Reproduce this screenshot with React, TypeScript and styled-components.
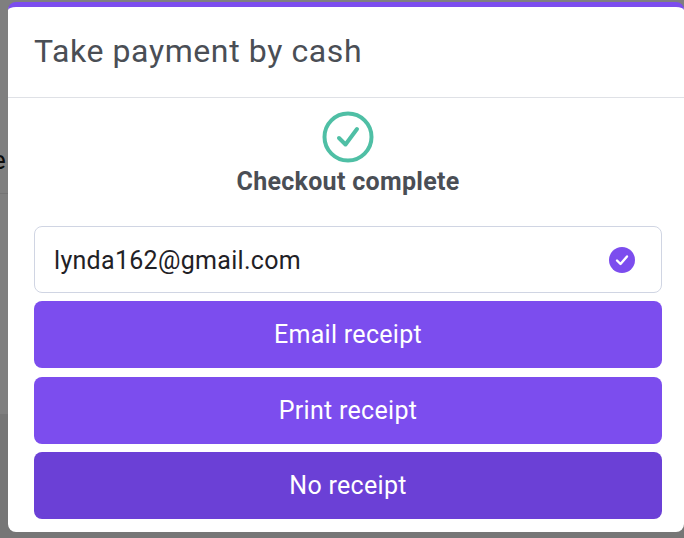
import React from "react";
import styled, { createGlobalStyle } from "styled-components";

const GlobalStyle = createGlobalStyle`
  html, body {
    margin: 0;
    padding: 0;
    height: 100%;
    overflow: hidden;
    background: #7f7f7f;
    font-family: Roboto, "Liberation Sans", sans-serif;
  }
`;

const Page = styled.div`
  position: relative;
  width: 684px;
  height: 538px;
  overflow: hidden;
  background: #7f7f7f;
`;

const Behind = styled.div`
  height: 194px;
  border-bottom: 1px solid #747474;
  overflow: hidden;
  font-size: 26px;
  line-height: 30px;
  color: #0a0a0a;
  padding-top: 145px;
  box-sizing: border-box;
  margin-left: -8px;
`;

const BehindFooter = styled.div`
  height: 124px;
  margin-top: 220px;
  background: #767676;
`;

const Modal = styled.div`
  position: absolute;
  left: 8px;
  top: 2px;
  width: 676px;
  height: 530px;
  box-sizing: border-box;
  background: #fff;
  border-top: 5px solid #7c4dee;
  border-radius: 8px;
  overflow: hidden;
`;

const Header = styled.div`
  height: 91px;
  box-sizing: border-box;
  padding: 0 26px 2px;
  display: flex;
  align-items: center;
  border-bottom: 1px solid #dfe1e6;
`;

const Title = styled.h2`
  margin: 0;
  font-size: 32px;
  font-weight: 400;
  letter-spacing: 0.6px;
  color: #4a4e55;
`;

const Body = styled.div`
  display: flex;
  flex-direction: column;
  align-items: center;
  padding: 13px 22px 0 26px;
`;

const Heading = styled.div`
  margin-top: 3px;
  font-size: 25px;
  line-height: 32px;
  font-weight: 700;
  letter-spacing: 0.3px;
  color: #4a4e55;
`;

const EmailField = styled.div`
  width: 100%;
  height: 67px;
  margin-top: 28px;
  box-sizing: border-box;
  padding: 0 26px 0 19px;
  display: flex;
  align-items: center;
  justify-content: space-between;
  border: 1px solid #d0d5e3;
  border-radius: 8px;
  font-size: 25px;
  letter-spacing: 0.3px;
  color: #1f2126;
`;

const EmailText = styled.span`
  padding-top: 2px;
`;

const Actions = styled.div`
  width: 100%;
  margin-top: 8px;
  display: flex;
  flex-direction: column;
  gap: 8.5px;
`;

const ActionButton = styled.button<{ $dark?: boolean }>`
  height: 67px;
  border: 0;
  border-radius: 8px;
  background: ${(p) => (p.$dark ? "#6b40d6" : "#7c4dee")};
  color: #fff;
  font-family: inherit;
  font-size: 25px;
  letter-spacing: 0.3px;
`;

const App = (): JSX.Element => {
  return (
    <Page>
      <GlobalStyle />
      <Behind>e</Behind>
      <BehindFooter />
      <Modal>
        <Header>
          <Title>Take payment by cash</Title>
        </Header>
        <Body>
          <svg width="52" height="52" viewBox="0 0 52 52" fill="none">
            <circle cx="26" cy="26" r="23.5" stroke="#4fbfa5" strokeWidth="4" />
            <path d="M17 27l6.5 6.5L35 18" stroke="#4fbfa5" strokeWidth="4" strokeLinecap="round" strokeLinejoin="round" />
          </svg>
          <Heading>Checkout complete</Heading>
          <EmailField>
            <EmailText>lynda162@gmail.com</EmailText>
            <svg width="26" height="26" viewBox="0 0 26 26">
              <circle cx="13" cy="13" r="13" fill="#7c4dee" />
              <path d="M8 13.5l3.5 3.5L18 9.5" stroke="#fff" strokeWidth="2.4" fill="none" strokeLinecap="round" strokeLinejoin="round" />
            </svg>
          </EmailField>
          <Actions>
            <ActionButton>Email receipt</ActionButton>
            <ActionButton>Print receipt</ActionButton>
            <ActionButton $dark>No receipt</ActionButton>
          </Actions>
        </Body>
      </Modal>
    </Page>
  );
};

export default App;
